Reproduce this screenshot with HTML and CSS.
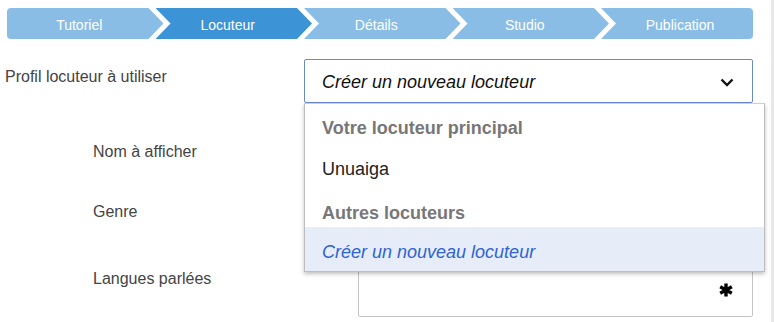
FILE: index.html
```html
<!DOCTYPE html>
<html lang="fr">

<head>
    <meta charset="UTF-8" />
    <title>Locuteur</title>
    <link rel="stylesheet" href="styles.css">
</head>

<body>

    <!-- Wizard steps -->
    <nav class="steps">
        <div class="step first">Tutoriel</div>
        <div class="step active">Locuteur</div>
        <div class="step">Détails</div>
        <div class="step">Studio</div>
        <div class="step last">Publication</div>
    </nav>

    <div class="form">
        <div class="row main-row">
            <label class="label">Profil locuteur à utiliser</label>
            <div class="select-wrap">
                <div class="select">
                    <span>Créer un nouveau locuteur</span>
                    <svg class="caret" width="14" height="9" viewBox="0 0 14 9">
                        <path d="M1.5 1.5 L7 7 L12.5 1.5" fill="none" stroke="#111" stroke-width="2.4" />
                    </svg>
                </div>

                <!-- open menu -->
                <div class="menu">
                    <div class="group-label first">Votre locuteur principal</div>
                    <div class="option">Unuaiga</div>
                    <div class="group-label">Autres locuteurs</div>
                    <div class="option selected">Créer un nouveau locuteur</div>
                </div>
            </div>
        </div>

        <div class="row sub-row name-row">
            <label class="label">Nom à afficher</label>
            <div class="input"></div>
        </div>

        <div class="row sub-row genre-row">
            <label class="label">Genre</label>
            <div class="input"></div>
        </div>

        <div class="row sub-row lang-row">
            <label class="label">Langues parlées</label>
            <div class="input required">
                <svg class="star" width="14" height="14" viewBox="0 0 14 14">
                    <path d="M7 0.5 V13.5 M1.2 3.8 L12.8 10.2 M1.2 10.2 L12.8 3.8" stroke="#000" stroke-width="3.4" />
                </svg>
            </div>
        </div>
    </div>

</body>

</html>
```

FILE: styles.css
```css
html {
    background: linear-gradient(to left, #e8e8e8 3px, #fff 3px);
    min-height: 100%;
}

body {
    margin: 0;
    font-family: "Liberation Sans", Arial, sans-serif;
    color: #444;
}

.steps {
    display: flex;
    margin: 8px 21px 0 7px;
    height: 31px;
}

.step {
    flex: 1;
    background: #8abde5;
    color: #fff;
    font-size: 14px;
    line-height: 28px;
    padding: 3px 12px 0 0;
    text-align: center;
    margin-left: -8px;
    clip-path: polygon(0 0, calc(100% - 15px) 0, 100% 50%, calc(100% - 15px) 100%, 0 100%, 15px 50%);
}

.step.first {
    margin-left: 0;
    border-radius: 4px 0 0 4px;
    clip-path: polygon(0 0, calc(100% - 15px) 0, 100% 50%, calc(100% - 15px) 100%, 0 100%);
}

.step.last {
    flex: 0 0 146px;
    padding: 3px 0 0 6px;
    margin-left: -8px;
    border-radius: 0 4px 4px 0;
    clip-path: polygon(0 0, 100% 0, 100% 100%, 0 100%, 15px 50%);
}

.step.active {
    background: #3c93d5;
}

.form {
    padding-top: 20px;
}

.row {
    display: grid;
}

.label {
    font-size: 16px;
    line-height: 20px;
    padding-top: 8px;
}

.main-row {
    grid-template-columns: 299px 1fr;
    margin: 0 21px 0 5px;
}

.select-wrap {
    position: relative;
}

.select {
    display: flex;
    align-items: center;
    justify-content: space-between;
    height: 44px;
    box-sizing: border-box;
    border: 1px solid #6a88d4;
    border-radius: 2px;
    padding: 2px 18px 0 17px;
    font-size: 18px;
    font-style: italic;
    color: #111;
}

.menu {
    position: absolute;
    top: 44px;
    left: 0;
    width: 461px;
    box-sizing: border-box;
    background: #fff;
    border: 1px solid #bdbdbd;
    border-top-color: #d0d0d0;
    box-shadow: 0 2px 4px rgba(0, 0, 0, 0.25);
    z-index: 5;
}

.group-label {
    font-size: 18px;
    line-height: 22px;
    font-weight: bold;
    color: #777;
    padding: 14px 17px 3px;
}

.group-label.first {
    padding-top: 13px;
    padding-bottom: 5px;
}

.option {
    font-size: 18px;
    line-height: 22px;
    color: #222;
    padding: 14px 17px 8px;
}

.option.selected {
    background: #e6edf8;
    color: #2f62d4;
    font-style: italic;
}

.sub-row {
    grid-template-columns: 265px 1fr;
    margin: 0 21px 0 93px;
}

.name-row {
    margin-top: 31px;
    height: 50px;
}

.genre-row {
    margin-top: 10px;
    height: 57px;
}

.lang-row {
    margin-top: 10px;
    height: 56px;
}

.input {
    border: 1px solid #c4c4c4;
    border-radius: 2px;
    box-sizing: border-box;
}

.input.required {
    display: flex;
    justify-content: flex-end;
    padding: 21px 19px 0 0;
}
```
